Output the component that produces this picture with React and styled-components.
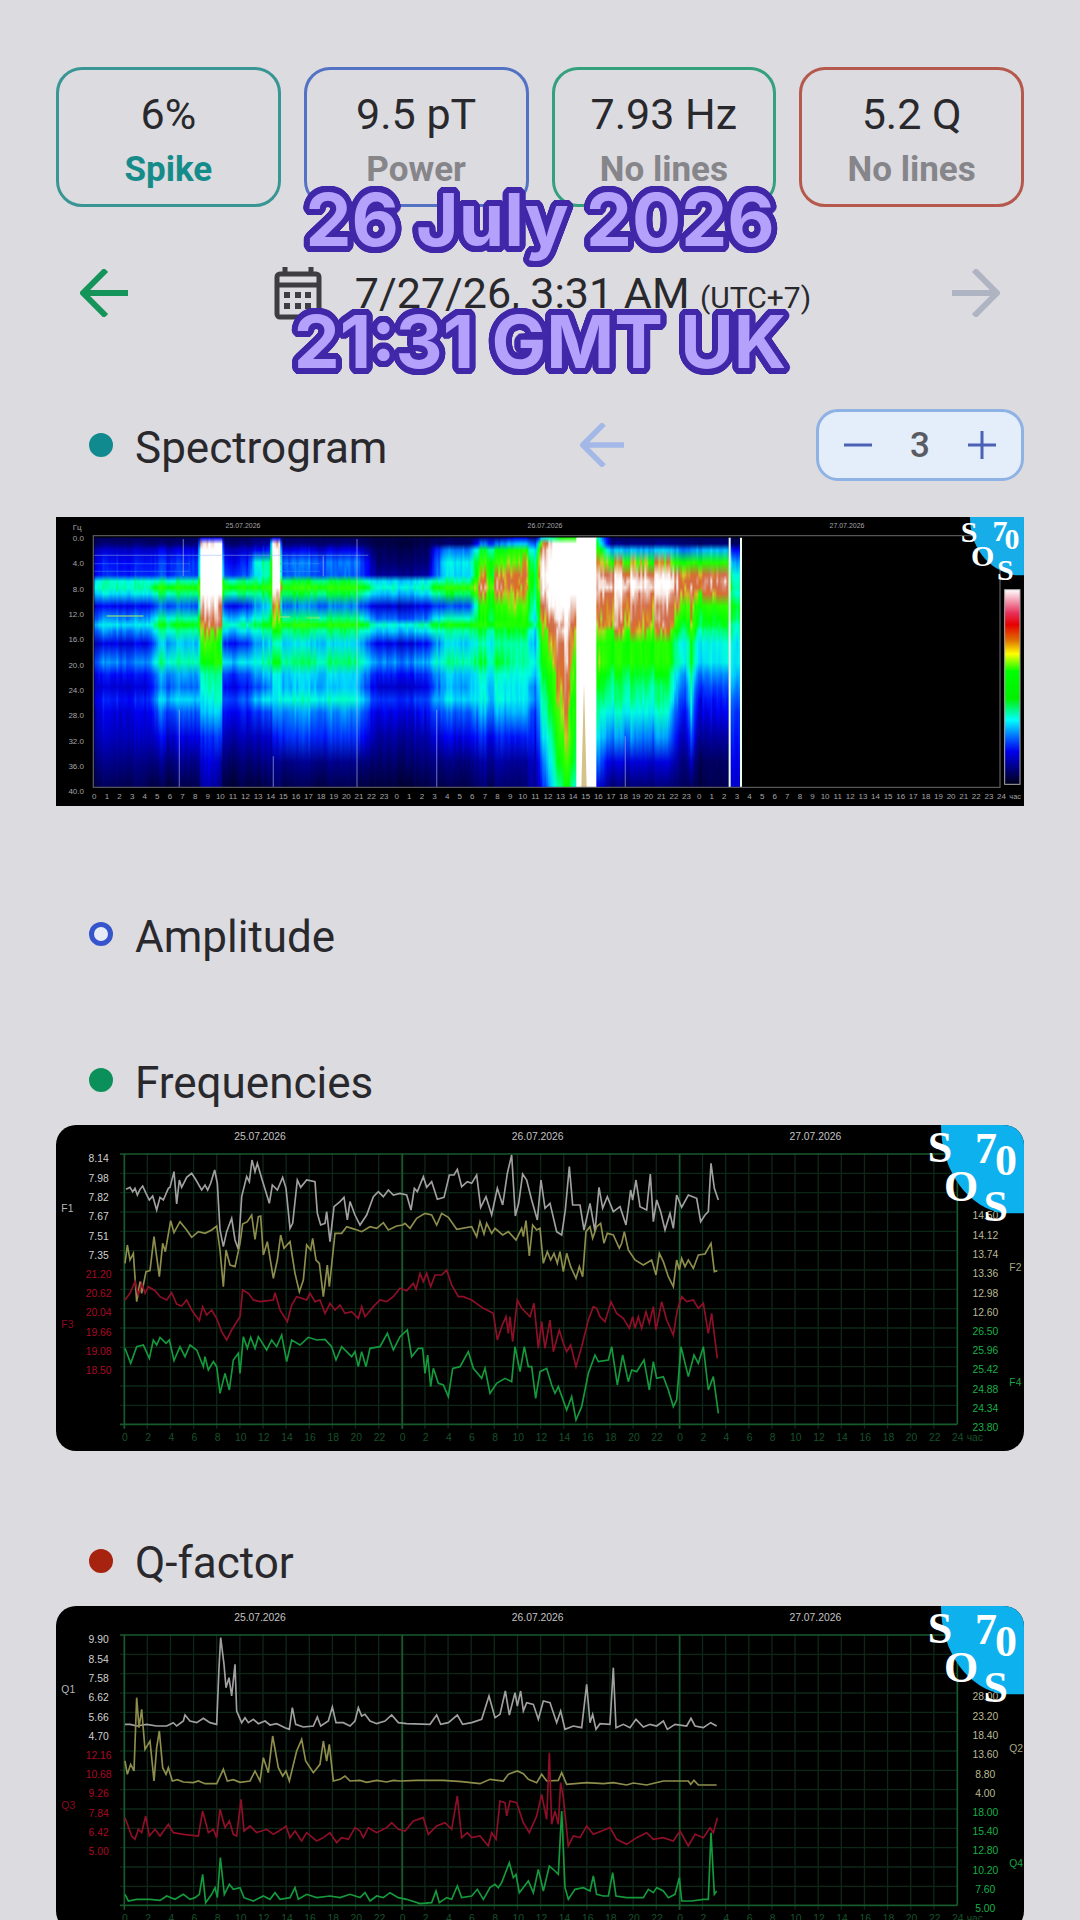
import { useState } from 'react';
import styled, { createGlobalStyle } from 'styled-components';

const GlobalStyle = createGlobalStyle`
  * {
    box-sizing: border-box;
  }

  body {
    margin: 0;
    background-color: #dcdbe0;
    color: #29292d;
    font-family: Roboto, 'Liberation Sans', sans-serif;
  }
`;

const Screen = styled.main`
  position: relative;
  height: 100vh;
  overflow: hidden;
  padding: 67px 56px 0;
`;

const StatList = styled.div`
  display: grid;
  grid-template-columns: repeat(4, 1fr);
  gap: 23px;
`;

const StatCard = styled.div`
  border: 3px solid ${(props) => props.$color};
  border-radius: 26px;
  padding: 16px 0 6px;
  text-align: center;

  .stat-value {
    font-size: 43px;
    line-height: 56px;
  }

  .stat-label {
    font-size: 35px;
    line-height: 56px;
    font-weight: 700;
    color: ${(props) => props.$labelColor || '#85858a'};
  }
`;

const DateBar = styled.div`
  display: flex;
  align-items: center;
  justify-content: space-between;
  height: 84px;
  margin-top: 44px;
  padding: 0 24px;
`;

const IconButton = styled.button`
  display: flex;
  padding: 0;
  border: none;
  background: none;
  color: ${(props) => props.$color};
`;

const DateButton = styled.button`
  display: flex;
  align-items: center;
  gap: 33px;
  padding: 0 0 0 5px;
  border: none;
  background: none;
  color: inherit;
  font-family: inherit;
  font-size: 43px;
  line-height: 56px;

  span {
    padding-top: 5px;
  }

  small {
    font-size: 30px;
  }
`;

// A ring of hard shadows gives the lettering an outline with round corners
const outline = (radius, color) =>
  Array.from({ length: 32 }, (_, i) => {
    const angle = (i * Math.PI) / 16;
    return `${(radius * Math.cos(angle)).toFixed(2)}px ${(radius * Math.sin(angle)).toFixed(2)}px 0 ${color}`;
  }).join(', ');

const Caption = styled.div`
  position: absolute;
  top: 159px;
  left: 0;
  right: 0;
  text-align: center;
  font-family: Inter, 'Liberation Sans', sans-serif;
  font-size: 73px;
  line-height: 122px;
  font-weight: 700;
  color: #b3a1fb;
  text-shadow: ${outline(6, '#4128a8')};
  pointer-events: none;
`;

const Section = styled.section`
  margin-top: ${(props) => props.$space || 74}px;
`;

const SectionHeader = styled.div`
  display: flex;
  align-items: center;
  height: 72px;
  padding-left: 33px;

  h2 {
    flex: 1;
    margin: 0;
    padding-top: 5px;
    font-size: 44px;
    line-height: 56px;
    font-weight: 400;
  }
`;

const Dot = styled.span`
  width: 24px;
  height: 24px;
  margin-right: 22px;
  border: 5px solid ${(props) => props.$color};
  border-radius: 50%;
  background-color: ${(props) => (props.$hollow ? '#e6ebf8' : props.$color)};
`;

const Stepper = styled.div`
  display: flex;
  align-items: center;
  justify-content: space-between;
  width: 208px;
  height: 72px;
  margin-left: 192px;
  padding: 0 25px;
  border: 3px solid #8fb2e4;
  border-radius: 22px;
  background-color: #e4edfa;
  color: #5a5b61;
  font-size: 35px;
  font-weight: 500;
`;

const ChartFrame = styled.div`
  margin-top: ${(props) => props.$space || 9}px;
  border-radius: ${(props) => props.$radius || 0}px;
  overflow: hidden;
  background-color: #000;

  svg {
    display: block;
    width: 100%;
  }

  text {
    font-family: 'Liberation Sans', sans-serif;
  }

  .logo text {
    font-family: 'Liberation Serif', serif;
    font-weight: 700;
  }
`;

function ArrowIcon({ size = 48, stroke = 6, flip }) {
  return (
    <svg width={size} height={size} viewBox="0 0 48 48" fill="none">
      <path
        d={flip ? 'M0 24H45M22 1L45 24L22 47' : 'M48 24H3M26 1L3 24L26 47'}
        stroke="currentColor"
        strokeWidth={stroke}
        strokeLinejoin="round"
      />
    </svg>
  );
}

function CalendarIcon() {
  return (
    <svg width="48" height="54" viewBox="0 0 48 54" fill="none">
      <rect x="3" y="8" width="42" height="43" rx="3" stroke="#3d3d42" strokeWidth="5" />
      <path d="M3 19H45M11 1V8M37 1V8" stroke="#3d3d42" strokeWidth="5" />
      {[13, 24, 34].map((x) => (
        <g key={x} fill="#3d3d42">
          <rect x={x - 3} y="26" width="6" height="6" />
          <rect x={x - 3} y="37" width="6" height="6" />
        </g>
      ))}
    </svg>
  );
}

function SignIcon({ plus }) {
  return (
    <svg width="28" height="28" viewBox="0 0 28 28">
      <path d={plus ? 'M0 14H28M14 0V28' : 'M0 14H28'} stroke="#4a61b5" strokeWidth="3" />
    </svg>
  );
}

// Intensity (0-100) by frequency for a moment in time, hours from midnight
const FREQUENCIES = [0, 1, 2, 4, 6, 7, 8, 9, 11, 13, 14, 15, 17, 20, 22, 24, 26, 28, 32, 36, 40];

const CALM = [5, 8, 16, 22, 24, 46, 48, 42, 20, 34, 42, 34, 18, 34, 22, 17, 23, 18, 15, 10, 5];
const WAVE = [5, 8, 18, 26, 28, 48, 60, 50, 30, 48, 56, 48, 38, 48, 36, 32, 40, 30, 18, 10, 4];
const BURST = [20, 99, 100, 100, 100, 100, 100, 100, 96, 90, 84, 74, 66, 58, 50, 48, 45, 40, 26, 18, 14];
const MID = [5, 8, 16, 22, 28, 50, 60, 50, 22, 40, 48, 40, 24, 42, 28, 22, 30, 22, 14, 8, 3];
const HUMP = [8, 12, 22, 48, 46, 52, 62, 52, 38, 48, 56, 48, 38, 48, 38, 32, 42, 28, 16, 10, 4];
const PEAK = [20, 99, 100, 100, 100, 100, 100, 98, 78, 74, 70, 60, 48, 58, 46, 44, 44, 36, 24, 12, 8];
const STRONG = [5, 8, 18, 32, 30, 52, 62, 52, 32, 50, 61, 50, 40, 50, 40, 38, 45, 34, 25, 10, 4];
const QUIET = [3, 4, 6, 8, 12, 42, 47, 40, 18, 32, 47, 40, 20, 36, 24, 17, 27, 20, 13, 8, 3];
const RISE = [5, 8, 34, 44, 42, 50, 64, 54, 30, 48, 60, 50, 42, 50, 40, 38, 42, 32, 20, 10, 5];
const STORM = [10, 30, 52, 62, 68, 74, 76, 70, 60, 56, 60, 52, 46, 52, 44, 42, 42, 36, 22, 12, 7];
const STORM_HIGH = [20, 40, 62, 74, 82, 80, 78, 76, 70, 62, 62, 56, 50, 50, 46, 44, 44, 38, 24, 12, 8];
const DIP = [10, 30, 42, 50, 54, 54, 54, 52, 48, 44, 50, 42, 38, 44, 40, 34, 34, 28, 22, 14, 12];
const ONSET = [40, 70, 84, 96, 98, 98, 96, 90, 80, 72, 68, 64, 60, 56, 52, 50, 46, 44, 40, 30, 22];
const SLOPE = [50, 98, 100, 100, 100, 100, 100, 100, 98, 86, 82, 78, 72, 66, 62, 60, 58, 56, 50, 46, 42];
const WEDGE = [60, 100, 100, 100, 100, 100, 100, 100, 100, 100, 98, 97, 95, 91, 88, 86, 82, 80, 75, 66, 58];
const EDGE = [60, 100, 100, 100, 100, 100, 100, 100, 98, 92, 86, 80, 76, 70, 68, 64, 62, 60, 58, 54, 50];
const FULL = FREQUENCIES.map(() => 100);
const AFTER = [50, 58, 66, 80, 94, 98, 98, 92, 84, 80, 78, 72, 64, 68, 60, 58, 54, 50, 44, 34, 20];
const LATE = [5, 10, 38, 68, 88, 95, 97, 90, 83, 79, 78, 70, 60, 60, 54, 50, 48, 44, 34, 17, 8];
const FADE = [5, 8, 34, 58, 78, 82, 82, 78, 68, 60, 56, 52, 45, 46, 38, 34, 30, 24, 16, 10, 6];
const LAST = [5, 8, 38, 60, 82, 87, 84, 76, 62, 56, 54, 50, 44, 42, 34, 28, 22, 19, 12, 6, 4];
const TAIL = [3, 6, 20, 36, 44, 46, 48, 46, 54, 52, 48, 46, 42, 42, 38, 34, 30, 26, 22, 18, 16];

const KEYFRAMES = [
  [0, CALM], [4, CALM], [5, WAVE], [8.2, WAVE], [8.4, BURST], [9.2, BURST], [10, PEAK],
  [10.2, MID], [12, MID], [12.8, HUMP], [13.9, HUMP], [14.1, PEAK], [14.6, PEAK],
  [14.8, STRONG], [21, STRONG], [22.4, QUIET], [26.4, QUIET], [27.6, RISE], [29.8, RISE],
  [30.6, STORM], [32, STORM], [33.4, STORM_HIGH], [34.2, STORM_HIGH], [34.5, DIP],
  [35, DIP], [35.4, ONSET], [36.3, SLOPE], [37.4, WEDGE], [38.1, EDGE], [38.2, FULL],
  [39.7, FULL], [39.8, AFTER], [41, LATE], [45.4, LATE], [46.3, FADE], [46.9, FADE],
  [47.3, LATE], [47.8, LAST], [50.2, LAST], [50.5, TAIL], [51.4, TAIL],
];

const PALETTE = [
  [0, 0, 0, 36], [10, 0, 0, 132], [20, 0, 0, 245], [30, 0, 80, 255], [40, 0, 210, 255],
  [45, 0, 255, 224], [50, 0, 255, 140], [56, 0, 255, 0], [66, 60, 255, 0],
  [71, 210, 210, 40], [77, 220, 110, 40], [85, 208, 110, 80], [93, 244, 222, 214],
  [100, 255, 255, 255],
];

function noise(n) {
  const s = Math.sin(n * 127.1) * 43758.5453;
  return s - Math.floor(s) - 0.5;
}

function getColor(value) {
  const v = Math.max(0, Math.min(100, value));
  const i = Math.max(1, PALETTE.findIndex(([stop]) => stop >= v));
  const a = PALETTE[i - 1];
  const b = PALETTE[i];
  const k = (v - a[0]) / (b[0] - a[0]);
  return `rgb(${[1, 2, 3].map((c) => Math.round(a[c] + (b[c] - a[c]) * k)).join(',')})`;
}

function getColumn(hour, index) {
  const i = Math.max(1, KEYFRAMES.findIndex(([h]) => h >= hour));
  const [h0, from] = KEYFRAMES[i - 1];
  const [h1, to] = KEYFRAMES[i];
  const k = (hour - h0) / (h1 - h0);
  const streak = noise(index) * 4 + noise(Math.floor(index / 4) + 900) * 5;

  return FREQUENCIES.map((f, j) => {
    const value = from[j] + (to[j] - from[j]) * k;
    if (value > 99) return getColor(100);
    const busy = value > 66 ? 3 : 1;
    const grain = noise(index * 31 + j * 7) * 3;
    return getColor(value + (f < 1 ? 0 : (streak + grain) * busy * (value < 18 ? 0.5 : 1)));
  });
}

const COLUMN = 6;
const columns = Array.from({ length: 323 }, (_, i) => getColumn((i * COLUMN) / 37.8, i));
const hours = Array.from({ length: 73 }, (_, i) => i);

function SpectrogramChart() {
  return (
    <svg viewBox="48 382 2904 868" role="img" aria-label="Spectrogram">
      <defs>
        {columns.map((colors, i) => (
          <linearGradient key={i} id={`column-${i}`} x1="0" y1="0" x2="0" y2="1">
            {colors.map((color, j) => (
              <stop key={j} offset={FREQUENCIES[j] / 40} stopColor={color} />
            ))}
          </linearGradient>
        ))}
        <linearGradient id="scale" x1="0" y1="0" x2="0" y2="1">
          <stop offset="0" stopColor="#fff" />
          <stop offset="0.12" stopColor="#e8305a" />
          <stop offset="0.18" stopColor="#e60000" />
          <stop offset="0.26" stopColor="#e07000" />
          <stop offset="0.33" stopColor="#ff0" />
          <stop offset="0.42" stopColor="#0f0" />
          <stop offset="0.56" stopColor="#00f000" />
          <stop offset="0.67" stopColor="#0ff" />
          <stop offset="0.76" stopColor="#06f" />
          <stop offset="0.83" stopColor="#00e" />
          <stop offset="1" stopColor="#000018" />
        </linearGradient>
      </defs>
      {columns.map((_, i) => (
        <rect key={i} x={163 + i * COLUMN} y="444" width={COLUMN + 4} height="748" fill={`url(#column-${i})`} />
      ))}
      <path d="M163 497H985" stroke="#8fb4ff" strokeOpacity="0.4" strokeWidth="4" />
      <path d="M163 522H450M163 545H450M720 522H840M720 545H840" stroke="#3f8cff" strokeOpacity="0.4" strokeWidth="4" />
      <path d="M200 679H310M720 682H750M800 684H840" stroke="#8fe07a" strokeOpacity="0.6" strokeWidth="6" />
      <path d="M951 448V1192M418 960V1192M430 448V560M700 1100V1192M850 500V560M1190 960V1192M1756 1040V1192" stroke="#cfd6ff" strokeOpacity="0.4" strokeWidth="4" />
      <path d="M2069 444V1192M2103 444V1192" stroke="#eafff0" strokeWidth="6" />
      <path d="M1632 880L1640 1192H1624Z" fill="#c9b46a" fillOpacity="0.8" />
      <path d="M160 438H2880V1193H160Z" fill="none" stroke="#55555a" strokeWidth="4" />
      <g fill="#a4a4a8" fontSize="24">
        <text x="98" y="422">Гц</text>
        {[0, 4, 8, 12, 16, 20, 24, 28, 32, 36, 40].map((f) => (
          <text key={f} x="132" y={454 + f * 19} textAnchor="end">{f}.0</text>
        ))}
        {hours.map((h) => (
          <text key={h} x={163 + h * 37.8} y="1229" textAnchor="middle">
            {h === 72 ? 24 : h % 24}
          </text>
        ))}
        <text x="2908" y="1229" fontSize="22">час</text>
        {['25.07.2026', '26.07.2026', '27.07.2026'].map((date, i) => (
          <text key={date} x={609 + i * 906} y="414" fontSize="21" textAnchor="middle">{date}</text>
        ))}
      </g>
      <rect x="2894" y="600" width="46" height="584" fill="url(#scale)" stroke="#aaa" strokeWidth="3" />
      <g className="logo">
        <path d="M2790 382H2952V557H2925C2840 540 2790 470 2790 382Z" fill="#16ade8" />
        <g fill="#fff" fontSize="90" textAnchor="middle">
          <text x="2787" y="458">S</text>
          <text x="2828" y="530">O</text>
          <text x="2896" y="572">S</text>
          <text x="2880" y="455">7</text>
          <text x="2916" y="477">0</text>
        </g>
      </g>
    </svg>
  );
}

const frequencyChart = {
  name: 'F',
  left: ['8.14', '7.98', '7.82', '7.67', '7.51', '7.35'],
  leftLow: ['21.20', '20.62', '20.04', '19.66', '19.08', '18.50'],
  right: ['14.50', '14.12', '13.74', '13.36', '12.98', '12.60'],
  rightLow: ['26.50', '25.96', '25.42', '24.88', '24.34', '23.80'],
  lines: [
    {
      color: '#a0a0a0',
      points:
        '258,268 270,262 278,275 285,265 292,285 300,268 308,258 318,280 328,300 338,288 350,330 360,292 370,300 385,265 390,262 402,215 410,312 418,240 425,262 440,232 455,220 468,240 485,270 495,255 503,270 512,250 524,210 532,250 540,390 550,440 560,395 575,355 585,420 595,448 605,290 620,230 628,245 636,180 645,215 652,190 665,235 688,310 697,255 712,270 728,232 738,265 750,385 758,370 772,240 782,262 800,240 825,245 832,340 842,375 855,370 860,335 870,425 882,320 900,305 912,292 922,360 930,305 945,345 960,375 980,345 1000,290 1015,275 1030,290 1045,270 1060,285 1080,280 1100,285 1113,330 1123,265 1132,275 1150,230 1160,262 1175,245 1192,298 1212,292 1228,225 1242,225 1252,208 1265,260 1282,245 1295,250 1310,225 1322,322 1338,290 1355,345 1372,265 1388,315 1402,220 1415,165 1426,348 1436,310 1448,222 1460,240 1475,300 1492,360 1503,240 1515,325 1530,310 1550,395 1565,405 1576,330 1588,200 1598,315 1620,315 1632,390 1650,310 1665,395 1677,262 1688,325 1702,290 1720,335 1740,320 1758,375 1772,270 1778,300 1788,240 1800,320 1820,330 1831,222 1840,365 1850,300 1862,335 1875,390 1890,340 1900,385 1910,285 1925,322 1945,285 1970,295 1982,365 1995,345 2005,335 2013,190 2023,265 2035,300',
    },
    {
      color: '#8e8e4c',
      points:
        '255,490 262,435 270,480 280,460 290,605 300,545 305,580 318,515 330,512 342,410 350,470 358,530 368,430 376,455 392,362 402,398 420,365 440,390 455,412 475,395 495,400 515,390 530,378 540,450 550,560 558,450 570,495 585,500 600,430 608,372 622,365 635,345 645,418 655,350 662,348 670,465 682,425 700,535 712,480 722,405 732,445 750,425 765,520 778,575 790,540 800,435 812,450 818,415 828,480 838,490 850,590 862,495 868,560 885,400 905,400 920,380 945,388 965,395 990,380 1010,385 1030,368 1045,390 1070,378 1088,375 1095,370 1110,385 1130,355 1155,340 1175,345 1190,375 1205,340 1225,352 1250,388 1295,380 1310,410 1320,365 1332,402 1340,370 1355,400 1365,385 1388,405 1405,395 1428,420 1445,385 1450,410 1458,362 1468,468 1478,375 1490,390 1500,385 1510,490 1522,455 1532,480 1542,460 1552,490 1560,455 1570,515 1580,460 1592,500 1608,535 1618,500 1628,530 1638,395 1650,380 1658,415 1670,380 1682,370 1692,430 1702,400 1720,405 1738,445 1745,430 1753,395 1765,450 1785,480 1810,495 1835,480 1848,525 1858,460 1870,485 1885,530 1900,560 1910,480 1918,510 1925,475 1935,500 1945,480 1960,505 1975,465 1995,462 2013,430 2023,515 2032,512',
    },
    {
      color: '#8f0f28',
      points:
        '255,600 270,580 285,545 295,585 305,550 315,580 325,560 345,572 360,590 380,600 395,578 410,612 425,618 440,600 455,630 478,662 488,620 500,645 515,630 530,655 545,695 560,720 575,690 600,650 608,570 625,580 640,600 660,605 700,600 705,578 720,630 742,665 755,615 770,590 785,595 800,600 810,580 825,605 840,600 855,640 870,610 885,630 900,615 915,640 935,635 955,655 965,620 975,650 1000,620 1020,600 1040,605 1060,590 1080,565 1100,572 1120,550 1128,568 1140,520 1150,545 1160,520 1172,560 1185,525 1205,525 1220,510 1235,555 1255,590 1270,590 1295,600 1330,625 1360,640 1372,720 1385,680 1398,650 1405,700 1410,650 1418,725 1432,600 1445,625 1470,650 1482,610 1495,745 1505,665 1515,745 1530,660 1540,755 1558,690 1570,730 1580,755 1592,735 1608,800 1625,740 1645,660 1660,620 1670,625 1680,650 1695,665 1713,605 1730,640 1750,655 1768,685 1778,650 1785,685 1795,650 1805,685 1818,635 1828,670 1840,620 1848,690 1865,605 1880,660 1900,705 1912,630 1925,590 1940,605 1960,600 1975,625 1990,610 2005,700 2015,640 2032,775',
    },
    {
      color: '#149a3c',
      points:
        '255,745 272,790 290,740 310,735 328,775 340,720 350,735 360,712 378,730 388,720 402,782 420,740 435,770 450,735 470,750 490,800 495,770 505,810 520,785 530,800 540,880 555,820 568,870 580,780 595,760 600,820 610,710 622,745 632,712 645,745 655,710 680,750 695,720 710,740 725,705 740,785 755,720 780,735 805,712 830,720 855,718 875,740 888,780 905,740 935,770 945,755 955,800 965,755 978,800 990,745 1020,740 1042,700 1060,750 1080,710 1102,690 1115,770 1135,745 1148,745 1155,820 1163,765 1172,860 1180,805 1195,850 1210,855 1225,890 1238,805 1260,800 1285,755 1300,805 1325,835 1335,805 1350,880 1370,850 1395,835 1415,845 1425,740 1440,815 1453,740 1465,800 1475,800 1487,895 1500,815 1520,805 1535,855 1545,880 1555,860 1580,930 1595,890 1608,960 1625,920 1645,820 1665,765 1675,785 1705,780 1715,740 1732,855 1748,765 1765,845 1775,810 1790,815 1812,780 1828,870 1840,785 1850,835 1870,830 1885,870 1900,920 1910,900 1923,740 1945,830 1962,765 1975,790 1990,740 2005,870 2020,830 2035,940',
    },
  ],
};

const qualityChart = {
  name: 'Q',
  left: ['9.90', '8.54', '7.58', '6.62', '5.66', '4.70'],
  leftLow: ['12.16', '10.68', '9.26', '7.84', '6.42', '5.00'],
  right: ['28.00', '23.20', '18.40', '13.60', '8.80', '4.00'],
  rightLow: ['18.00', '15.40', '12.80', '10.20', '7.60', '5.00'],
  lines: [
    {
      color: '#a0a0a0',
      points:
        '255,430 270,430 290,435 320,430 350,435 380,435 400,425 410,435 430,420 435,402 450,420 470,425 490,412 510,425 530,430 537,260 542,170 552,250 558,320 567,290 575,345 585,250 590,390 605,425 615,410 625,425 640,415 655,428 675,420 690,432 710,428 735,440 748,445 757,380 767,430 790,438 820,435 832,408 842,435 865,420 877,378 888,425 910,425 930,435 945,420 955,380 965,405 975,400 990,420 1010,428 1035,420 1055,402 1075,425 1100,428 1170,430 1190,402 1202,430 1225,425 1252,402 1268,430 1295,425 1325,415 1347,345 1365,410 1380,400 1396,330 1408,402 1425,335 1432,375 1442,330 1450,390 1460,365 1480,370 1495,415 1510,360 1530,365 1550,425 1562,390 1575,445 1600,435 1625,440 1640,310 1650,425 1658,400 1668,445 1680,428 1710,430 1720,260 1728,440 1750,430 1770,440 1788,415 1810,438 1830,430 1850,435 1870,420 1882,445 1905,430 1940,435 1953,412 1965,435 1990,440 2012,425 2030,435',
    },
    {
      color: '#8e8e4c',
      points:
        '255,540 262,580 272,550 282,570 290,350 297,440 305,385 315,505 330,480 342,600 350,500 358,450 368,560 378,580 385,560 397,600 412,596 430,603 460,605 475,600 495,608 530,608 550,565 562,600 580,596 600,604 630,600 645,570 660,600 670,530 685,575 698,465 715,560 728,585 738,570 748,600 770,510 785,475 797,540 820,575 840,550 850,480 860,540 868,490 880,600 900,595 915,585 930,600 960,598 980,604 1010,598 1040,603 1060,598 1080,600 1130,598 1210,598 1265,602 1320,608 1350,595 1390,600 1405,580 1432,570 1450,578 1465,595 1490,605 1505,580 1520,600 1555,598 1565,575 1580,610 1640,605 1690,608 1720,605 1760,612 1780,606 1820,612 1870,600 1945,600 1952,610 1962,598 1975,612 2030,612',
    },
    {
      color: '#8f0f28',
      points:
        '255,710 275,765 285,775 295,745 305,755 317,705 328,765 345,745 360,765 385,730 400,755 430,760 475,765 488,690 505,755 520,745 530,770 540,685 555,740 568,720 580,760 590,765 603,655 612,750 630,735 650,755 680,745 700,760 725,745 738,735 750,770 765,750 785,780 800,755 830,780 850,770 870,755 890,785 905,770 925,775 945,740 960,750 970,770 985,740 1010,755 1040,740 1055,725 1075,745 1095,750 1120,720 1150,710 1165,760 1190,735 1215,725 1235,745 1252,645 1265,770 1282,755 1295,770 1320,765 1345,795 1355,755 1368,775 1380,660 1395,665 1400,705 1410,660 1430,665 1450,725 1468,755 1490,705 1505,640 1520,715 1528,515 1535,730 1545,690 1555,730 1562,605 1570,650 1585,795 1600,765 1620,770 1640,735 1660,760 1685,750 1710,740 1730,775 1760,790 1790,770 1820,755 1840,775 1870,770 1900,780 1920,750 1945,795 1965,760 1990,770 2010,740 2020,755 2032,710',
    },
    {
      color: '#149a3c',
      points:
        '255,940 265,960 290,955 330,955 360,958 380,945 405,955 430,940 450,955 465,950 478,940 488,880 497,965 515,940 525,920 532,950 541,830 553,940 568,910 580,925 600,920 612,950 640,960 670,945 690,955 705,935 720,955 750,950 765,920 775,955 800,940 830,950 870,945 900,950 930,940 960,950 975,935 990,960 1010,945 1030,950 1050,935 1075,950 1100,955 1140,968 1175,965 1188,930 1198,965 1220,950 1235,955 1252,915 1265,950 1295,945 1312,925 1330,955 1350,920 1365,910 1375,920 1385,905 1408,845 1420,890 1428,880 1438,935 1465,900 1480,935 1495,865 1510,930 1528,855 1545,870 1555,880 1565,690 1575,920 1585,955 1605,925 1630,920 1650,930 1660,885 1670,940 1690,945 1705,945 1718,875 1728,945 1760,950 1810,950 1825,925 1840,935 1850,920 1870,930 1885,950 1905,940 1918,890 1925,960 1955,960 1990,955 2005,955 2013,755 2023,940 2030,930',
    },
  ],
};

function AxisLabels({ values, x, y, color }) {
  return values.map((value, i) => (
    <text key={value} x={x} y={y + i * 58} fill={color} textAnchor="middle">
      {value}
    </text>
  ));
}

function LineChart({ chart }) {
  const { name, left, leftLow, right, rightLow, lines } = chart;
  return (
    <svg viewBox="48 75 2904 976" role="img" aria-label={`${name} chart`}>
      <g stroke="#0d2716" strokeWidth="4">
        {Array.from({ length: 13 }, (_, i) => (
          <path key={i} d={`M240 ${220 + i * 58}H2752`} />
        ))}
        {Array.from({ length: 35 }, (_, i) => (
          <path key={i} d={`M${322 + i * 69.4} 160V986`} />
        ))}
      </g>
      <path d="M240 162H2752M240 973H2752M253 162V986M1087 162V986M1919 162V986M2752 162V973" stroke="#175a2b" strokeWidth="5" />
      {lines.map(({ color, points }) => (
        <polyline key={color} points={points} fill="none" stroke={color} strokeWidth="5" />
      ))}
      <g fontSize="31">
        <AxisLabels values={left} x={176} y={187} color="#d0d0d0" />
        <AxisLabels values={leftLow} x={176} y={533} color="#a80a24" />
        <AxisLabels values={right} x={2836} y={358} color="#b9b995" />
        <AxisLabels values={rightLow} x={2836} y={704} color="#19b048" />
        <text x="64" y="336" fill="#b5b5b5">{name}1</text>
        <text x="64" y="684" fill="#8a0a20">{name}3</text>
        <text x="2908" y="512" fill="#a5a585">{name}2</text>
        <text x="2908" y="858" fill="#19a043">{name}4</text>
        {['25.07.2026', '26.07.2026', '27.07.2026'].map((date, i) => (
          <text key={date} x={660 + i * 833} y="121" fill="#c4c4c4" textAnchor="middle">{date}</text>
        ))}
        {Array.from({ length: 37 }, (_, i) => (
          <text key={i} x={255 + i * 69.4} y="1024" fill="#17522a" textAnchor="middle">
            {i === 36 ? 24 : (i * 2) % 24}
          </text>
        ))}
        <text x="2780" y="1024" fill="#17522a">час</text>
      </g>
      <g className="logo">
        <path d="M2703 75H2952V340H2890C2790 325 2703 220 2703 75Z" fill="#0db1ee" />
        <g fill="#fff" fontSize="132" textAnchor="middle">
          <text x="2700" y="187">S</text>
          <text x="2763" y="304">O</text>
          <text x="2867" y="364">S</text>
          <text x="2838" y="190">7</text>
          <text x="2898" y="226">0</text>
        </g>
      </g>
    </svg>
  );
}

const stats = [
  { value: '6%', label: 'Spike', color: '#3a9694', labelColor: '#158c8a' },
  { value: '9.5 pT', label: 'Power', color: '#5472c4' },
  { value: '7.93 Hz', label: 'No lines', color: '#35a07c' },
  { value: '5.2 Q', label: 'No lines', color: '#b5594d' },
];

export default function App() {
  const [days, setDays] = useState(3);

  return (
    <>
      <GlobalStyle />
      <Screen>
        <StatList>
          {stats.map(({ value, label, color, labelColor }) => (
            <StatCard key={value} $color={color} $labelColor={labelColor}>
              <div className="stat-value">{value}</div>
              <div className="stat-label">{label}</div>
            </StatCard>
          ))}
        </StatList>

        <DateBar>
          <IconButton $color="#149459" aria-label="Previous">
            <ArrowIcon />
          </IconButton>
          <DateButton>
            <CalendarIcon />
            <span>
              7/27/26, 3:31 AM <small>(UTC+7)</small>
            </span>
          </DateButton>
          <IconButton $color="#aeb4c2" aria-label="Next">
            <ArrowIcon flip />
          </IconButton>
        </DateBar>

        <Section>
          <SectionHeader>
            <Dot $color="#118a8f" />
            <h2>Spectrogram</h2>
            <IconButton $color="#a3b8e6" aria-label="Earlier">
              <ArrowIcon size={44} />
            </IconButton>
            <Stepper>
              <IconButton aria-label="Fewer days" onClick={() => setDays(Math.max(1, days - 1))}>
                <SignIcon />
              </IconButton>
              <span>{days}</span>
              <IconButton aria-label="More days" onClick={() => setDays(days + 1)}>
                <SignIcon plus />
              </IconButton>
            </Stepper>
          </SectionHeader>
          <ChartFrame $space={36}>
            <SpectrogramChart />
          </ChartFrame>
        </Section>

        <Section $space={92}>
          <SectionHeader>
            <Dot $color="#3654cc" $hollow />
            <h2>Amplitude</h2>
          </SectionHeader>
        </Section>

        <Section>
          <SectionHeader>
            <Dot $color="#0c905a" />
            <h2>Frequencies</h2>
          </SectionHeader>
          <ChartFrame $radius={20}>
            <LineChart chart={frequencyChart} />
          </ChartFrame>
        </Section>

        <Section>
          <SectionHeader>
            <Dot $color="#a5230f" />
            <h2>Q-factor</h2>
          </SectionHeader>
          <ChartFrame $radius={20}>
            <LineChart chart={qualityChart} />
          </ChartFrame>
        </Section>

        <Caption>
          26 July 2026
          <br />
          21:31 GMT UK
        </Caption>
      </Screen>
    </>
  );
}
